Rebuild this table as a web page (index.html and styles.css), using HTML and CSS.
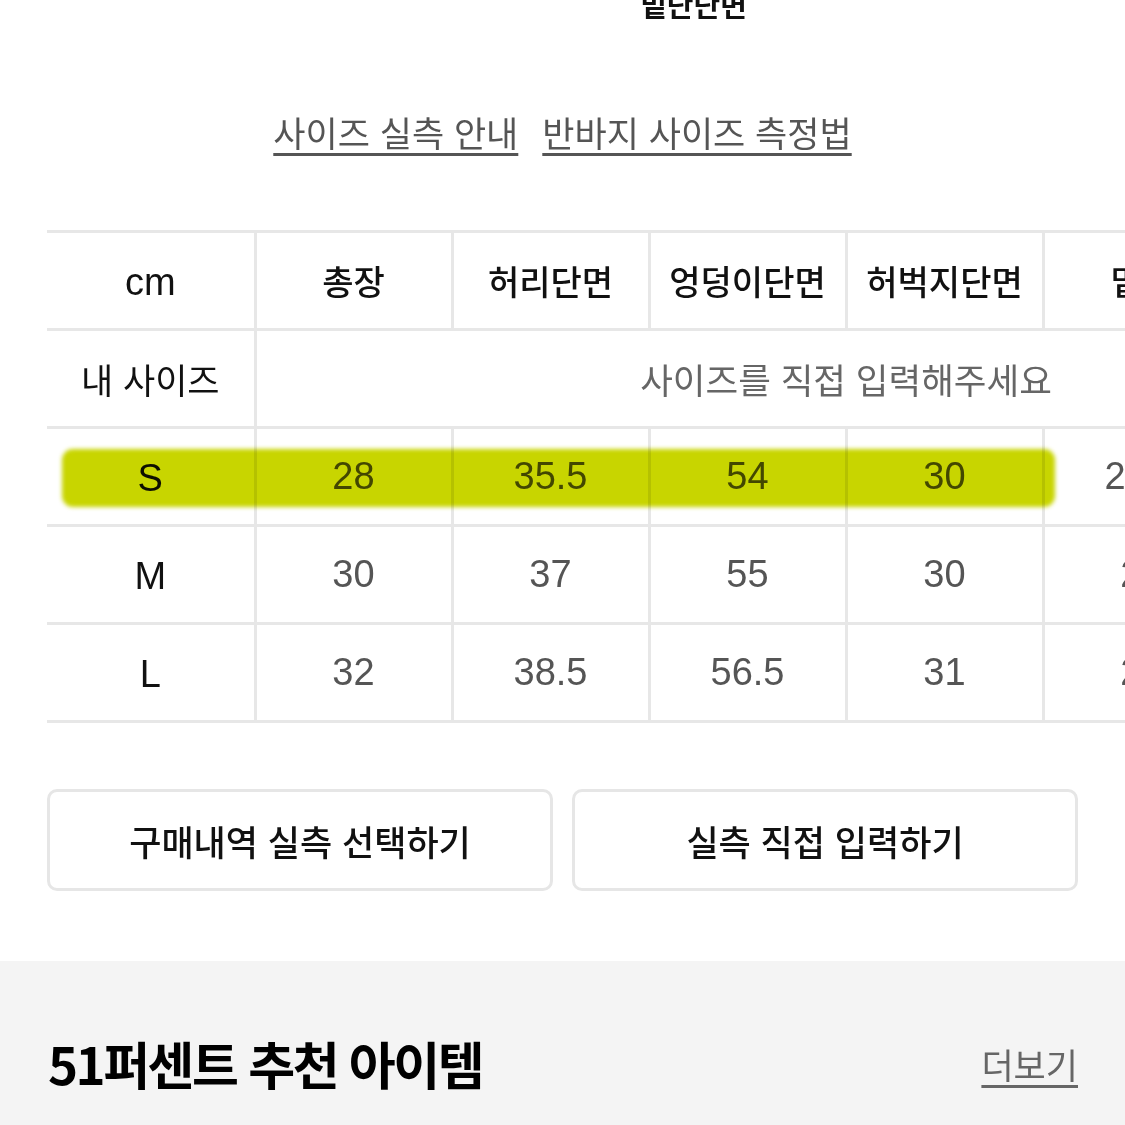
FILE: index.html
```html
<!DOCTYPE html>
<html lang="ko">
<head>
<meta charset="utf-8">
<link rel="stylesheet" href="styles.css">
</head>
<body>
<div class="page">
  <div class="top-title">밑단단면</div>
  <div class="links">
    <a class="link">사이즈 실측 안내</a>
    <a class="link">반바지 사이즈 측정법</a>
  </div>
  <div class="table-wrap">
    <table class="size-table">
      <colgroup>
        <col class="c-first">
        <col class="c-data"><col class="c-data"><col class="c-data"><col class="c-data"><col class="c-data"><col class="c-data">
      </colgroup>
      <tr class="head">
        <th class="first">cm</th><th>총장</th><th>허리단면</th><th>엉덩이단면</th><th>허벅지단면</th><th>밑위</th><th>밑단단면</th>
      </tr>
      <tr class="mine">
        <th class="first">내 사이즈</th>
        <td colspan="6" class="placeholder">사이즈를 직접 입력해주세요</td>
      </tr>
      <tr class="row hl-row">
        <th class="first size">S<span class="hl"></span></th><td>28</td><td>35.5</td><td>54</td><td>30</td><td>24.5</td><td>24</td>
      </tr>
      <tr class="row">
        <th class="first size">M</th><td>30</td><td>37</td><td>55</td><td>30</td><td>25</td><td>25</td>
      </tr>
      <tr class="row">
        <th class="first size">L</th><td>32</td><td>38.5</td><td>56.5</td><td>31</td><td>26</td><td>26</td>
      </tr>
    </table>
  </div>
  <div class="buttons">
    <button class="btn">구매내역 실측 선택하기</button>
    <button class="btn">실측 직접 입력하기</button>
  </div>
</div>
<section class="reco">
  <h2 class="reco-title">51퍼센트 추천 아이템</h2>
  <a class="more">더보기</a>
</section>
</body>
</html>
```
FILE: styles.css
```css
* { box-sizing: border-box; }
html, body { margin: 0; padding: 0; background: #fff; overflow: hidden; }
body {
  width: 1125px; height: 1125px;
  font-family: "Liberation Sans", "Noto Sans CJK KR", sans-serif;
  color: #111;
}
.page { padding: 0 0 0 47px; }
.top-title {
  margin-top: -16px;
  height: 40px;
  text-align: center;
  font-family: "Noto Sans CJK KR", sans-serif;
  font-weight: 700;
  font-size: 29px;
  line-height: 40px;
  padding-left: 215px;
  color: #111;
}
.links {
  display: flex;
  justify-content: center;
  gap: 24px;
  margin-top: 86px;
  padding-right: 47px;
  height: 50px;
}
.link {
  font-family: "Noto Sans CJK KR", sans-serif;
  font-size: 35px;
  line-height: 44px;
  color: #555;
  text-decoration: underline;
  text-decoration-thickness: 3px;
  text-underline-offset: 6px;
}
.table-wrap {
  margin-top: 70px;
  overflow: hidden;
  width: 1078px;
}
.size-table {
  border-collapse: collapse;
  table-layout: fixed;
  width: 1390px;
}
.c-first { width: 208px; }
.c-data { width: 197px; }
.size-table th, .size-table td {
  height: 98px;
  padding: 0;
  text-align: center;
  border: 3px solid #e7e7e7;
  border-left: 0;
  white-space: nowrap;
  font-family: "Liberation Sans", "Noto Sans CJK KR", sans-serif;
}
.size-table td + td, .size-table th + th, .size-table th + td { border-left: 3px solid #e7e7e7; }
.head th {
  font-family: "Noto Sans CJK KR", sans-serif;
  font-weight: 500;
  font-size: 34px;
  color: #111;
}
.head th.first {
  font-family: "Liberation Sans", sans-serif;
  font-size: 38px;
  font-weight: 400;
  padding-top: 4px;
}
.mine th.first {
  font-family: "Noto Sans CJK KR", sans-serif;
  font-weight: 400;
  font-size: 35px;
  color: #111;
}
.placeholder {
  font-family: "Noto Sans CJK KR", sans-serif;
  font-size: 35.5px;
  color: #666;
}
.row td {
  font-size: 38px;
  color: #555;
}
.row th.size {
  font-size: 38px;
  font-weight: 400;
  color: #111;
  padding-top: 4px;
}
.hl-row th.first { position: relative; }
.hl {
  position: absolute;
  left: 15px;
  top: 20px;
  width: 993px;
  height: 58px;
  border-radius: 11px;
  background: #c8d500;
  mix-blend-mode: multiply;
  filter: blur(2px);
  z-index: 2;
}
.buttons {
  display: flex;
  gap: 19px;
  margin-top: 66px;
  width: 1031px;
}
.btn {
  flex: 1;
  height: 102px;
  background: #fff;
  border: 3px solid #e6e6e6;
  border-radius: 10px;
  font-family: "Noto Sans CJK KR", sans-serif;
  font-size: 35px;
  font-weight: 500;
  color: #111;
}
.reco {
  margin-top: 70px;
  background: #f4f4f4;
  height: 200px;
  display: flex;
  justify-content: space-between;
  align-items: flex-start;
  padding: 70px 47px 0 48px;
}
.reco-title {
  margin: 0;
  font-family: "Noto Sans CJK KR", sans-serif;
  font-size: 51px;
  font-weight: 700;
  line-height: 64px;
  color: #000;
  letter-spacing: -2.5px;
}
.more {
  margin-top: 8px;
  font-family: "Noto Sans CJK KR", sans-serif;
  font-size: 35px;
  line-height: 50px;
  color: #666;
  text-decoration: underline;
  text-decoration-thickness: 3px;
  text-underline-offset: 6px;
}
```
